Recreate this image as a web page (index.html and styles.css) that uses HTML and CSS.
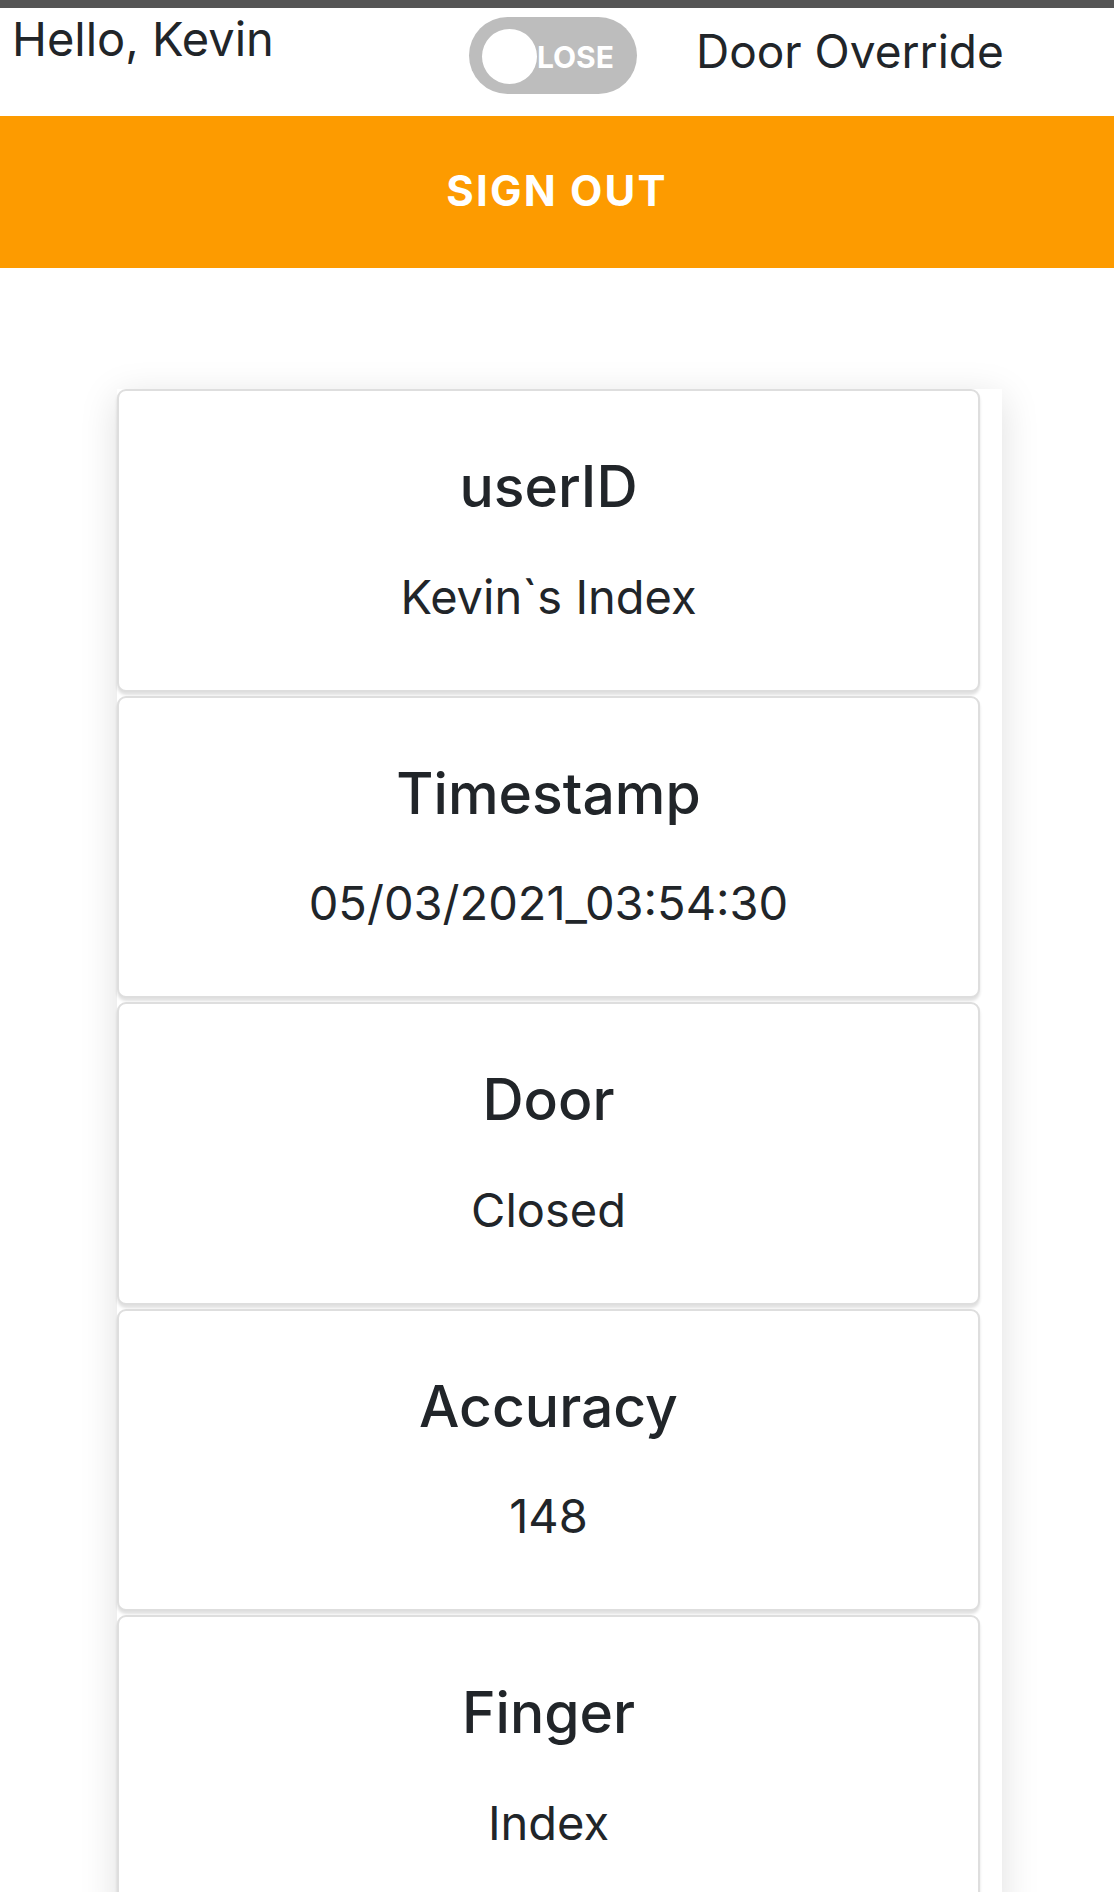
FILE: index.html
```html
<!DOCTYPE html>
<html lang="en">
<head>
<meta charset="utf-8">
<title>Dashboard</title>
<link rel="stylesheet" href="styles.css">
</head>
<body>
<div class="topbar"></div>
<header class="header">
  <div class="greeting">Hello, Kevin</div>
  <div class="toggle">
    <span class="toggle-label">CLOSE</span>
    <span class="toggle-knob"></span>
  </div>
  <div class="override">Door Override</div>
</header>
<button class="signout">SIGN OUT</button>
<main class="records">
  <section class="card">
    <h5 class="card-title">userID</h5>
    <p class="card-value">Kevin`s Index</p>
  </section>
  <section class="card">
    <h5 class="card-title">Timestamp</h5>
    <p class="card-value">05/03/2021_03:54:30</p>
  </section>
  <section class="card">
    <h5 class="card-title">Door</h5>
    <p class="card-value">Closed</p>
  </section>
  <section class="card">
    <h5 class="card-title">Accuracy</h5>
    <p class="card-value">148</p>
  </section>
  <section class="card">
    <h5 class="card-title">Finger</h5>
    <p class="card-value">Index</p>
  </section>
</main>
</body>
</html>
```

FILE: styles.css
```css
html, body {
  margin: 0;
  padding: 0;
  background: #ffffff;
}
body {
  font-family: Inter, "Liberation Sans", sans-serif;
  color: #212529;
  overflow: hidden;
}
.topbar {
  height: 8px;
  background: #555555;
}
.header {
  display: flex;
  align-items: flex-start;
  height: 108px;
}
.greeting {
  font-size: 47px;
  line-height: 1;
  margin: 7px 0 0 12px;
  width: 457px;
  flex: none;
}
.toggle {
  position: relative;
  flex: none;
  width: 168px;
  height: 77px;
  margin-top: 9px;
  border-radius: 39px;
  background: #bdbdbd;
  display: flex;
  align-items: center;
  justify-content: flex-end;
  box-sizing: border-box;
  padding-right: 23px;
  overflow: hidden;
}
.toggle-label {
  color: #ffffff;
  font-weight: 700;
  font-size: 30px;
  line-height: 1;
  margin-top: 2px;
}
.toggle-knob {
  position: absolute;
  left: 13px;
  top: 12px;
  width: 55px;
  height: 55px;
  border-radius: 50%;
  background: #ffffff;
}
.override {
  font-size: 46px;
  line-height: 1;
  margin: 20px 0 0 59px;
  flex: none;
}
.signout {
  display: block;
  width: 100%;
  height: 152px;
  border: 0;
  margin: 0;
  padding: 0 0 4px;
  background: #fd9b00;
  color: #ffffff;
  font-family: Inter, "Liberation Sans", sans-serif;
  font-weight: 700;
  font-size: 42px;
  letter-spacing: 2.2px;
}
.records {
  width: 885px;
  margin: 121px 0 0 117px;
  box-shadow: 0 8px 36px rgba(0, 0, 0, 0.13);
  background: #ffffff;
}
.card {
  box-sizing: border-box;
  width: 863px;
  height: 302.5px;
  margin-bottom: 4px;
  padding-top: 5px;
  border: 2px solid #dedede;
  border-radius: 9px;
  box-shadow: 0 3px 3px rgba(0, 0, 0, 0.12);
  display: flex;
  flex-direction: column;
  align-items: center;
  justify-content: center;
  background: #ffffff;
}
.card-title {
  margin: 0 0 40px;
  font-size: 57px;
  font-weight: 500;
  line-height: 1.2;
}
.card-value {
  margin: 0;
  font-size: 47px;
  line-height: 1.5;
}
```
